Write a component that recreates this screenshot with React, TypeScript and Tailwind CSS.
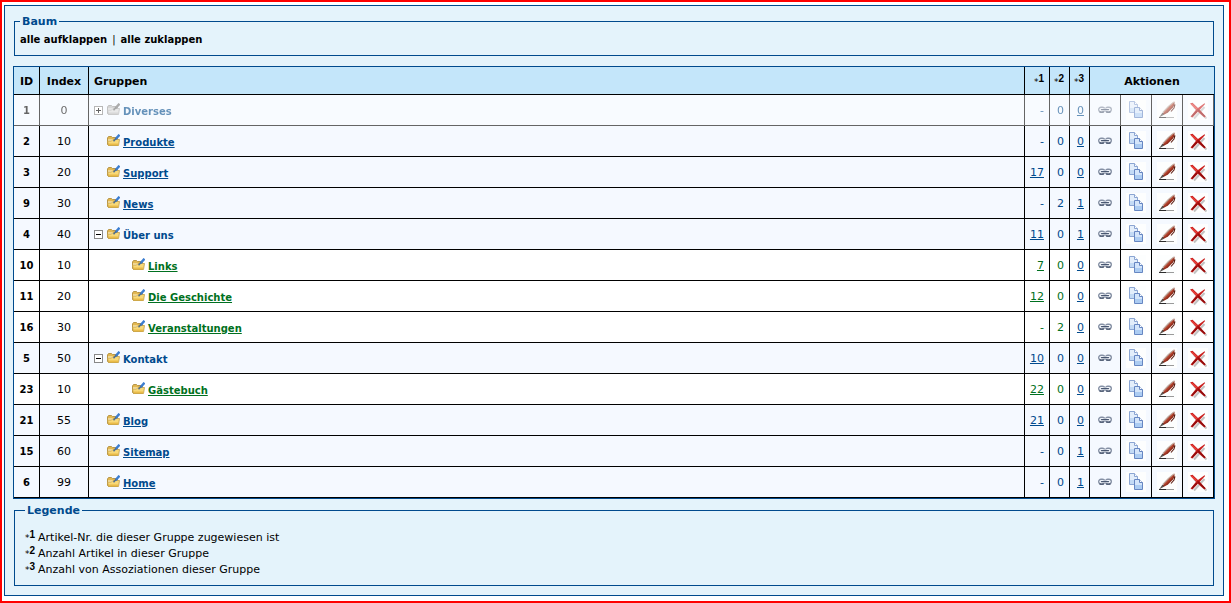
import { useState } from "react";
import type { ReactNode } from "react";
import { clsx } from "clsx";

type Group = {
  id: number;
  index: number;
  name: string;
  articleNr?: number;
  articles: number;
  associations: number;
  parent?: number;
  expandable?: boolean;
  inactive?: boolean;
};

const groups: Group[] = [
  { id: 1, index: 0, name: "Diverses", articles: 0, associations: 0, expandable: true, inactive: true },
  { id: 2, index: 10, name: "Produkte", articles: 0, associations: 0 },
  { id: 3, index: 20, name: "Support", articleNr: 17, articles: 0, associations: 0 },
  { id: 9, index: 30, name: "News", articles: 2, associations: 1 },
  { id: 4, index: 40, name: "Über uns", articleNr: 11, articles: 0, associations: 1, expandable: true },
  { id: 10, index: 10, name: "Links", articleNr: 7, articles: 0, associations: 0, parent: 4 },
  { id: 11, index: 20, name: "Die Geschichte", articleNr: 12, articles: 0, associations: 0, parent: 4 },
  { id: 16, index: 30, name: "Veranstaltungen", articles: 2, associations: 0, parent: 4 },
  { id: 5, index: 50, name: "Kontakt", articleNr: 10, articles: 0, associations: 0, expandable: true },
  { id: 23, index: 10, name: "Gästebuch", articleNr: 22, articles: 0, associations: 0, parent: 5 },
  { id: 21, index: 55, name: "Blog", articleNr: 21, articles: 0, associations: 0 },
  { id: 15, index: 60, name: "Sitemap", articles: 0, associations: 1 },
  { id: 6, index: 99, name: "Home", articles: 0, associations: 1 },
];

const legend = [
  "Artikel-Nr. die dieser Gruppe zugewiesen ist",
  "Anzahl Artikel in dieser Gruppe",
  "Anzahl von Assoziationen dieser Gruppe",
];

const cell = "h-[31px] border-r border-b border-black p-0";
const textCell = "h-[31px] border-r border-b border-black px-0 pt-0.5 pb-0";
const headCell = "h-7 border-r border-b border-black px-0 pt-0.5 pb-0";

function FolderIcon({ gray }: { gray?: boolean }) {
  return (
    <svg viewBox="0 0 13 13" className={clsx("mb-0.5 size-[13px] shrink-0", gray && "grayscale")} aria-hidden="true">
      <path d="M.5 4 1.500 2.500H4.500l1 1h5v8H1.500l-1-1z" fill="#e3b850" stroke="#b89648" />
      <path d="M1 5.500h9.500v2H1z" fill="#fff6cf" />
      <path d="M.5 7h4l1.500-1.500h6.500L11.500 11.500H1.500z" fill="#f8d978" stroke="#c29d45" strokeWidth=".8" />
      <path d="M1.800 9.500h9.600l-.3 1.700H2z" fill="#eabb48" />
      <path d="M12.500.7 8.500 5.200" stroke="#3b7dd0" strokeWidth="2.400" />
      <path d="M9 4.600 6.500 7.200" stroke="#4d6c8c" strokeWidth="1.500" />
    </svg>
  );
}

function LinkIcon() {
  return (
    <svg viewBox="0 0 16 8" className="h-2 w-4" aria-hidden="true">
      <g fill="none">
        <rect x="1.700" y="1.200" width="6" height="4.800" rx="2.400" stroke="#8691a5" strokeWidth="1.400" />
        <rect x="8.300" y="1.200" width="6" height="4.800" rx="2.400" stroke="#8691a5" strokeWidth="1.400" />
        <path d="M2.500 5.800c.8.600 3.500.600 4.300 0M9.200 5.800c.8.600 3.500.600 4.300 0" stroke="#3f4d66" strokeWidth="1.200" />
        <path d="M4 3.600h8" stroke="#eef2f8" strokeWidth="2.400" strokeLinecap="round" />
        <path d="M4.500 3.600h7" stroke="#4a5872" strokeWidth="1.300" strokeLinecap="round" />
      </g>
    </svg>
  );
}

function CopyIcon() {
  return (
    <svg viewBox="0 0 20 20" className="size-5" aria-hidden="true">
      <rect width="20" height="20" fill="#fdfefe" />
      <path d="M3.500 1.500h5l3 3v8h-8z" fill="#e3eefb" stroke="#8ba5d3" />
      <path d="M4 8h7v4H4z" fill="#c3daf5" />
      <path d="M8.500 1.500v3h3" fill="#fff" stroke="#8ba5d3" />
      <path d="M8.500 7.500h5l3 3v7h-8z" fill="#d4e5fa" stroke="#6686c2" />
      <path d="M9 13h7v4H9z" fill="#acccf2" />
      <path d="M13.500 7.500v3h3" fill="#fff" stroke="#6686c2" />
    </svg>
  );
}

function PenIcon() {
  return (
    <svg viewBox="0 0 20 20" className="size-5" aria-hidden="true">
      <rect width="20" height="20" fill="#fdfefe" />
      <path d="M2 17.500h15" stroke="#9a9a9a" />
      <path d="M2 17.500h7" stroke="#2c2c2c" />
      <path d="M17.500 1.500 12 6 7 11.500 5 14l1.500 1 4.500-2.500 5-5 1.500-3z" fill="#93301f" />
      <path d="M17 2 11.500 6.500 6 12.500" fill="none" stroke="#bfa79c" strokeWidth="1.400" />
      <path d="m16.500 3.700-4.500 4.600-4.500 4.200" fill="none" stroke="#b8452f" strokeWidth="1.300" />
      <path d="M5.500 12.500 2.300 17.300 7 14.800z" fill="#57504c" />
      <path d="M16.500 5h1.300L17 8l-3 3.500" fill="none" stroke="#5b1e14" strokeWidth="1.100" />
    </svg>
  );
}

function DeleteIcon() {
  return (
    <svg viewBox="0 0 20 20" className="size-5" aria-hidden="true">
      <rect width="20" height="20" fill="#fdfefe" />
      <path d="m6 7 12.500 11.500M16.500 7 6 18.500" stroke="#c2c2c2" strokeWidth="2" />
      <path d="M2 3.500 4.500 2.800 10 8l6.500-4.800.6.700-5.300 5.800 6 6.700-1.300 1.200-6.600-5.900-5.400 5.900-2-.8L8 9.700z" fill="#c91c1a" />
      <path d="M3.500 4 9 9" stroke="#e8423c" strokeWidth="1.500" />
      <path d="m9.500 9.500 7.300 7M9 11l-5 5.300" stroke="#8f0e0e" strokeWidth="1.500" />
    </svg>
  );
}

const actions: { label: string; icon: ReactNode }[] = [
  { label: "Verknüpfen", icon: <LinkIcon /> },
  { label: "Kopieren", icon: <CopyIcon /> },
  { label: "Bearbeiten", icon: <PenIcon /> },
  { label: "Löschen", icon: <DeleteIcon /> },
];

function Note({ n }: { n: number }) {
  return (
    <span className="inline-flex items-center">
      <span className="text-[9px] leading-3">*</span>
      <span className="mb-1.5 font-['Liberation_Sans',sans-serif] text-[10px] leading-3 font-bold">{n}</span>
    </span>
  );
}

function ToggleBox({ open, label, onClick }: { open: boolean; label: string; onClick: () => void }) {
  return (
    <button type="button" aria-label={label} aria-expanded={open} onClick={onClick} className="size-[9px] shrink-0">
      <svg viewBox="0 0 9 9" className="size-[9px]" aria-hidden="true">
        <rect x=".5" y=".5" width="8" height="8" fill="#fff" stroke="#888" />
        <path d={open ? "M2 4.500h5" : "M2 4.500h5M4.500 2v5"} stroke="#000" />
      </svg>
    </button>
  );
}

function GroupRow({ group, open, onToggle }: { group: Group; open: boolean; onToggle: () => void }) {
  const color = group.parent ? "text-[#007020]" : "text-[#004a8d]";

  return (
    <tr className={clsx(group.parent ? "bg-white" : "bg-[#f5f9ff]", group.inactive && "opacity-60")}>
      <td className={clsx(textCell, "text-center text-[10px] font-bold")}>{group.id}</td>
      <td className={clsx(textCell, "text-center")}>{group.index}</td>
      <td className={cell}>
        <div className={clsx("flex items-center", group.parent ? "pl-[43px]" : "gap-x-1 pl-[5px]")}>
          {group.expandable ? (
            <ToggleBox open={open} label={group.name} onClick={onToggle} />
          ) : (
            !group.parent && <span className="w-[9px]" />
          )}
          <div className="flex items-center gap-[3px]">
            <FolderIcon gray={group.inactive} />
            {group.expandable ? (
              <span className={clsx("pt-[3px] text-[10px] font-bold", color)}>{group.name}</span>
            ) : (
              <a href="#" className={clsx("pt-[3px] text-[10px] font-bold underline", color)}>
                {group.name}
              </a>
            )}
          </div>
        </div>
      </td>
      <td className={clsx(textCell, "pr-[5px] text-right", color)}>
        {group.articleNr ? (
          <a href="#" className="underline">
            {group.articleNr}
          </a>
        ) : (
          "-"
        )}
      </td>
      <td className={clsx(textCell, "pr-[5px] text-right", color)}>{group.articles}</td>
      <td className={clsx(textCell, "pr-[5px] text-right text-[#004a8d]")}>
        <a href="#" className="underline">
          {group.associations}
        </a>
      </td>
      {actions.map((action) => (
        <td key={action.label} className={cell}>
          <button type="button" aria-label={action.label} className="flex w-full items-center justify-center">
            {action.icon}
          </button>
        </td>
      ))}
    </tr>
  );
}

export default function App() {
  const [open, setOpen] = useState<number[]>([4, 5]);

  const toggle = (id: number) =>
    setOpen((ids) => (ids.includes(id) ? ids.filter((i) => i !== id) : [...ids, id]));

  return (
    <div className="min-h-screen border-2 border-[#ff0000] bg-white pt-[3px] pr-[5px] pb-[5px] pl-0.5 font-['DejaVu_Sans',Verdana,sans-serif] text-[11px] leading-4 text-black">
      <main className="border border-[#004a8d] bg-[#e4f3fb] px-2 pt-2 pb-[9px]">
        {/* Tree controls */}
        <fieldset className="mx-px border border-[#004a8d] px-[5px] pt-[3px] pb-[7px]">
          <legend className="px-0.5 pt-px leading-[14px] font-bold text-[#004a8d]">Baum</legend>
          <div className="flex gap-[5px] text-[10px]">
            <button type="button" className="font-bold" onClick={() => setOpen([1, 4, 5])}>
              alle aufklappen
            </button>
            <span>|</span>
            <button type="button" className="font-bold" onClick={() => setOpen([])}>
              alle zuklappen
            </button>
          </div>
        </fieldset>

        {/* Groups */}
        <table className="mt-2.5 w-full table-fixed border-separate border-spacing-0 border border-[#004a8d] bg-white">
          <colgroup>
            <col className="w-[26px]" />
            <col className="w-[49px]" />
            <col />
            <col className="w-[25px]" />
            <col className="w-5" />
            <col className="w-5" />
            <col className="w-[31px]" />
            <col className="w-[31px]" />
            <col className="w-[31px]" />
            <col className="w-[31px]" />
          </colgroup>
          <thead>
            <tr className="bg-[#c4e6fa]">
              <th className={headCell}>ID</th>
              <th className={headCell}>Index</th>
              <th className={clsx(headCell, "pl-[5px] text-left")}>Gruppen</th>
              {[1, 2, 3].map((n) => (
                <th key={n} className={clsx(headCell, "pr-[5px] text-right font-normal")}>
                  <Note n={n} />
                </th>
              ))}
              <th colSpan={4} className="h-7 border-b border-black px-0 pt-0.5 pb-0">
                Aktionen
              </th>
            </tr>
          </thead>
          <tbody>
            {groups
              .filter((g) => !g.parent || open.includes(g.parent))
              .map((g) => (
                <GroupRow key={g.id} group={g} open={open.includes(g.id)} onToggle={() => toggle(g.id)} />
              ))}
          </tbody>
        </table>

        {/* Footnotes */}
        <fieldset className="mx-px mt-1 border border-[#004a8d] px-2.5 pt-3 pb-[7px]">
          <legend className="px-0.5 pt-px leading-[14px] font-bold text-[#004a8d]">Legende</legend>
          <ul>
            {legend.map((text, i) => (
              <li key={text} className="flex h-4 items-center gap-[3px]">
                <Note n={i + 1} />
                {text}
              </li>
            ))}
          </ul>
        </fieldset>
      </main>
    </div>
  );
}
